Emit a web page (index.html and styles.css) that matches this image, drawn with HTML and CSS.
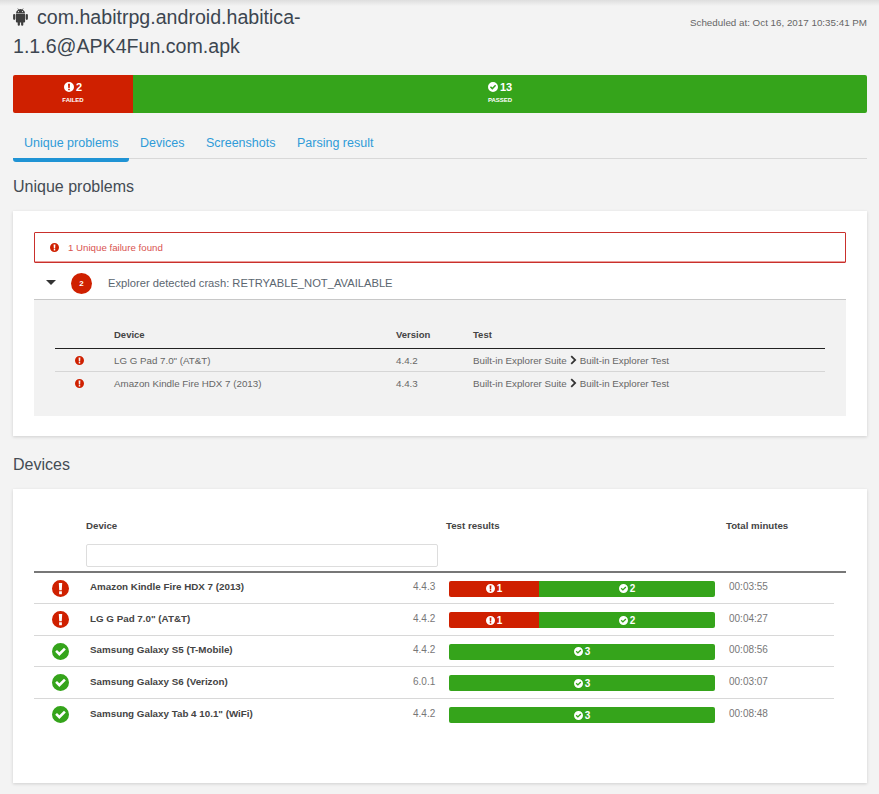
FILE: index.html
```html
<!DOCTYPE html>
<html lang="en">
<head>
  <meta charset="UTF-8" />
  <title>com.habitrpg.android.habitica-1.1.6@APK4Fun.com.apk</title>
  <link rel="stylesheet" href="styles.css">
</head>
<body>
  <svg class="defs" width="0" height="0">
    <symbol id="i-fail" viewBox="0 0 16 16">
      <path fill-rule="evenodd" d="M8 0a8 8 0 1 0 0 16A8 8 0 0 0 8 0z M6.4 2.8h3.2l-.4 6.8H6.8z M6.7 10.6h2.6v2.7H6.7z"/>
    </symbol>
    <symbol id="i-pass" viewBox="0 0 16 16">
      <path fill-rule="evenodd" d="M8 0a8 8 0 1 0 0 16A8 8 0 0 0 8 0z M3 8.3l1.7-1.7 2.2 2.2 4.4-4.4 1.7 1.7-6.1 6.1z"/>
    </symbol>
  </svg>

  <div class="top-shadow"></div>

  <div class="page">
    <header class="head">
      <h1 class="title">
        <svg class="android" viewBox="0.5 0 15 17.8">
          <path fill-rule="evenodd" d="M3.4 5.4a4.6 4.6 0 0 1 2.3-3.7L5 .5l.4-.3.8 1.2a4.8 4.8 0 0 1 3.6 0l.8-1.2.4.3-.7 1.2a4.6 4.6 0 0 1 2.3 3.7z M6 3a.6.6 0 1 0 0 1.2A.6.6 0 0 0 6 3z M10 3a.6.6 0 1 0 0 1.2A.6.6 0 0 0 10 3z"/>
          <path d="M3.4 6h9.2v7.6a1 1 0 0 1-1 1h-.8v2.1a1.1 1.1 0 0 1-2.2 0v-2.1H7.4v2.1a1.1 1.1 0 0 1-2.2 0v-2.1h-.8a1 1 0 0 1-1-1z"/>
          <rect x="0.6" y="5.9" width="2.2" height="6" rx="1.1"/>
          <rect x="13.2" y="5.9" width="2.2" height="6" rx="1.1"/>
        </svg>com.habitrpg.android.habitica-1.1.6@APK4Fun.com.apk
      </h1>
      <div class="scheduled">Scheduled at: Oct 16, 2017 10:35:41 PM</div>
    </header>

    <div class="summary">
      <div class="summary-part fail">
        <div class="summary-count"><svg class="ico"><use href="#i-fail"/></svg>2</div>
        <div class="summary-label">FAILED</div>
      </div>
      <div class="summary-part pass">
        <div class="summary-count"><svg class="ico"><use href="#i-pass"/></svg>13</div>
        <div class="summary-label">PASSED</div>
      </div>
    </div>

    <nav class="tabs">
      <a class="tab active">Unique problems</a>
      <a class="tab">Devices</a>
      <a class="tab">Screenshots</a>
      <a class="tab">Parsing result</a>
    </nav>

    <h2 class="section-title">Unique problems</h2>
    <section class="card problems">
      <div class="alert"><svg class="ico"><use href="#i-fail"/></svg>1 Unique failure found</div>
      <div class="problem">
        <span class="caret"></span>
        <span class="badge">2</span>
        <span class="problem-text">Explorer detected crash: RETRYABLE_NOT_AVAILABLE</span>
      </div>
      <div class="detail">
        <div class="detail-row detail-head">
          <span></span><span>Device</span><span>Version</span><span>Test</span>
        </div>
        <div class="detail-row">
          <svg class="ico"><use href="#i-fail"/></svg>
          <span>LG G Pad 7.0" (AT&amp;T)</span><span>4.4.2</span>
          <span>Built-in Explorer Suite<svg class="chevron" viewBox="0 0 8 12"><path d="M2 0.5L7.5 6 2 11.5 0.5 10 4.5 6 0.5 2z"/></svg>Built-in Explorer Test</span>
        </div>
        <div class="detail-row">
          <svg class="ico"><use href="#i-fail"/></svg>
          <span>Amazon Kindle Fire HDX 7 (2013)</span><span>4.4.3</span>
          <span>Built-in Explorer Suite<svg class="chevron" viewBox="0 0 8 12"><path d="M2 0.5L7.5 6 2 11.5 0.5 10 4.5 6 0.5 2z"/></svg>Built-in Explorer Test</span>
        </div>
      </div>
    </section>

    <h2 class="section-title">Devices</h2>
    <section class="card devices">
      <div class="device-head">
        <div class="device-head-col">
          <span>Device</span>
          <input class="filter" type="text">
        </div>
        <span>Test results</span>
        <span>Total minutes</span>
      </div>

      <div class="device-row">
        <svg class="status fail-ico"><use href="#i-fail"/></svg>
        <span class="name">Amazon Kindle Fire HDX 7 (2013)</span>
        <span class="version">4.4.3</span>
        <div class="bar">
          <div class="bar-part fail part-1"><svg class="ico"><use href="#i-fail"/></svg>1</div>
          <div class="bar-part pass part-2"><svg class="ico"><use href="#i-pass"/></svg>2</div>
        </div>
        <span class="time">00:03:55</span>
      </div>
      <div class="device-row">
        <svg class="status fail-ico"><use href="#i-fail"/></svg>
        <span class="name">LG G Pad 7.0" (AT&amp;T)</span>
        <span class="version">4.4.2</span>
        <div class="bar">
          <div class="bar-part fail part-1"><svg class="ico"><use href="#i-fail"/></svg>1</div>
          <div class="bar-part pass part-2"><svg class="ico"><use href="#i-pass"/></svg>2</div>
        </div>
        <span class="time">00:04:27</span>
      </div>
      <div class="device-row">
        <svg class="status pass-ico"><use href="#i-pass"/></svg>
        <span class="name">Samsung Galaxy S5 (T-Mobile)</span>
        <span class="version">4.4.2</span>
        <div class="bar"><div class="bar-part pass part-all"><svg class="ico"><use href="#i-pass"/></svg>3</div></div>
        <span class="time">00:08:56</span>
      </div>
      <div class="device-row">
        <svg class="status pass-ico"><use href="#i-pass"/></svg>
        <span class="name">Samsung Galaxy S6 (Verizon)</span>
        <span class="version">6.0.1</span>
        <div class="bar"><div class="bar-part pass part-all"><svg class="ico"><use href="#i-pass"/></svg>3</div></div>
        <span class="time">00:03:07</span>
      </div>
      <div class="device-row last">
        <svg class="status pass-ico"><use href="#i-pass"/></svg>
        <span class="name">Samsung Galaxy Tab 4 10.1" (WiFi)</span>
        <span class="version">4.4.2</span>
        <div class="bar"><div class="bar-part pass part-all"><svg class="ico"><use href="#i-pass"/></svg>3</div></div>
        <span class="time">00:08:48</span>
      </div>
    </section>
  </div>
</body>
</html>
```

FILE: styles.css
```css
html, body {
  margin: 0;
  height: 794px;
  overflow: hidden;
}
body {
  background: #f3f3f3;
  font-family: "Liberation Sans", Arial, sans-serif;
  color: #555;
}
.defs {
  position: absolute;
}
.top-shadow {
  height: 6px;
  background: linear-gradient(#dedede, #f3f3f3);
}
.page {
  padding: 0 12px 0 13px;
}

/* header */
.head {
  display: flex;
  justify-content: space-between;
  height: 69px;
}
.title {
  margin: -3px 0 0;
  width: 320px;
  font-size: 19.6px;
  font-weight: normal;
  line-height: 29px;
  color: #3c4650;
}
.android {
  width: 15px;
  height: 17.8px;
  margin-right: 9px;
  fill: #3d3d3d;
  vertical-align: -2px;
}
.scheduled {
  margin-top: 11px;
  font-size: 9.8px;
  line-height: 12px;
  color: #666;
}

/* summary bar */
.summary {
  display: flex;
  height: 38px;
  border-radius: 2px;
  overflow: hidden;
  color: #fff;
}
.summary-part {
  text-align: center;
  padding-top: 6px;
}
.summary-part.fail {
  width: 120px;
}
.summary-part.pass {
  flex: 1;
}
.fail {
  background: #cf2000;
}
.pass {
  background: #35a41b;
}
.summary-count {
  font-size: 11px;
  font-weight: bold;
  line-height: 13px;
}
.summary-label {
  margin-top: 3px;
  font-size: 6px;
  font-weight: bold;
  line-height: 7px;
}
.ico {
  width: 10px;
  height: 10px;
  margin-right: 2px;
  fill: currentColor;
  vertical-align: -1px;
}

/* tabs */
.tabs {
  display: flex;
  height: 45px;
  border-bottom: 1px solid #d8d8d8;
  margin-bottom: 18px;
}
.tab {
  padding: 23px 10.5px 0 11px;
  font-size: 12.5px;
  line-height: 14px;
  color: #2f9bd8;
}
.tab.active {
  height: 22px;
  border-bottom: 4px solid #1f93d4;
  border-radius: 0 0 3px 3px;
}

.section-title {
  margin: 0 0 14px;
  font-size: 16px;
  font-weight: normal;
  line-height: 20px;
  color: #444c54;
}
.card {
  background: #fff;
  box-shadow: 0 1px 3px rgba(0, 0, 0, 0.15);
  padding: 21px;
}
.problems {
  height: 225px;
  box-sizing: border-box;
  margin-bottom: 19px;
}

/* failure alert */
.alert {
  display: flex;
  align-items: center;
  height: 29px;
  padding-left: 15px;
  border: 1px solid #c9302c;
  border-radius: 1px;
  box-shadow: inset 0 -1px 0 #ec9d9a;
  font-size: 9.7px;
  color: #d9534f;
}
.alert .ico {
  width: 9px;
  height: 9px;
  margin-right: 9px;
  color: #cf2000;
}

/* expandable problem */
.problem {
  display: flex;
  align-items: center;
  height: 36px;
  border-bottom: 1px solid #c8c8c8;
}
.caret {
  width: 0;
  height: 0;
  margin: 2px 15px 0 12px;
  border-top: 5px solid #333;
  border-left: 5px solid transparent;
  border-right: 5px solid transparent;
}
.badge {
  width: 21px;
  height: 21px;
  margin-top: 5px;
  border-radius: 50%;
  background: #cf2000;
  color: #fff;
  font-size: 8px;
  font-weight: bold;
  line-height: 21px;
  text-align: center;
}
.problem-text {
  margin-left: 16px;
  margin-top: 4px;
  font-size: 11.2px;
  color: #5b6670;
}
.detail {
  height: 116px;
  box-sizing: border-box;
  padding: 24px 21px 0;
  background: #f2f2f2;
}
.detail-row {
  display: grid;
  grid-template-columns: 59px 282px 77px 1fr;
  align-items: center;
  height: 22px;
  border-bottom: 1px solid #d6d6d6;
  font-size: 9.75px;
  color: #666;
}
.detail-row:last-child {
  border-bottom: none;
}
.detail-row .ico {
  width: 9px;
  height: 9px;
  margin: 0 0 0 20px;
  color: #cf2000;
}
.detail-head {
  height: 25px;
  box-sizing: border-box;
  padding-bottom: 4px;
  border-bottom: 1px solid #222;
  font-size: 9.5px;
  font-weight: bold;
  color: #444;
}
.chevron {
  width: 7px;
  height: 10px;
  margin: 0 3px;
  fill: #333;
  vertical-align: -1px;
}

/* devices */
.devices {
  height: 294px;
  box-sizing: border-box;
  padding: 31px 21px 0;
}
.device-head {
  display: grid;
  grid-template-columns: 360px 280px 1fr;
  padding-left: 52px;
  height: 50.5px;
  border-bottom: 2px solid #777;
  font-size: 9.7px;
  font-weight: bold;
  line-height: 12px;
  color: #444;
}
.device-head-col {
  display: flex;
  flex-direction: column;
  gap: 12px;
}
.filter {
  width: 352px;
  height: 23px;
  box-sizing: border-box;
  margin: 0;
  padding: 0;
  border: 1px solid #ddd;
  border-radius: 2px;
  background: #fff;
}
.device-row {
  display: grid;
  grid-template-columns: 56px 323px 36px 280px 1fr;
  align-items: center;
  height: 31.5px;
  box-sizing: border-box;
  width: 800px;
  border-bottom: 1px solid #d8d8d8;
  font-size: 10px;
  color: #777;
}
.device-row.last {
  border-bottom: none;
}
.status {
  width: 17px;
  height: 17px;
  margin: 1px 0 0 18px;
}
.fail-ico {
  fill: #cf2000;
}
.pass-ico {
  fill: #35a41b;
}
.name {
  font-size: 9.8px;
  font-weight: bold;
  color: #444;
  margin-bottom: 2px;
}
.version, .time {
  margin-bottom: 2px;
}
.bar {
  display: flex;
  width: 266px;
  height: 16px;
  border-radius: 2px;
  overflow: hidden;
  margin-top: 2px;
  color: #fff;
  font-size: 10px;
  font-weight: bold;
}
.bar-part {
  display: flex;
  align-items: center;
  justify-content: center;
}
.bar-part .ico {
  width: 9px;
  height: 9px;
  margin-right: 2px;
  vertical-align: 0;
}
.part-1 {
  width: 90px;
}
.part-2, .part-all {
  flex: 1;
}
```
